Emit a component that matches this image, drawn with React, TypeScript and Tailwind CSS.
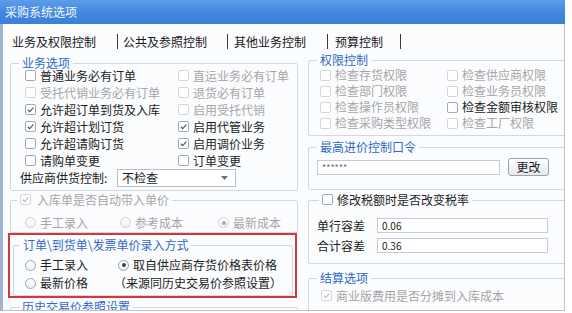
import { ReactNode } from 'react';

function Box({ checked, disabled }: { checked?: boolean; disabled?: boolean }) {
  return (
    <span
      className={`flex h-[11px] w-[11px] shrink-0 items-center justify-center rounded-[2px] border bg-white ${
        disabled ? 'border-[#d3d7dc]' : 'border-[#a3a9b1]'
      }`}
    >
      {checked && (
        <svg viewBox="0 0 10 10" className="h-[9px] w-[9px]">
          <path
            d="M2 5.3 L4.1 7.3 L8.2 2.8"
            fill="none"
            stroke={disabled ? '#b7bbc0' : '#50555b'}
            strokeWidth="1.3"
          />
        </svg>
      )}
    </span>
  );
}

function Radio({ checked, disabled }: { checked?: boolean; disabled?: boolean }) {
  return (
    <span
      className={`flex h-[11px] w-[11px] shrink-0 items-center justify-center rounded-full border bg-gradient-to-b from-white to-[#eef0f3] ${
        disabled ? 'border-[#cfd3d8]' : 'border-[#9ca3ac]'
      }`}
    >
      {checked && (
        <span className={`h-[4px] w-[4px] rounded-full ${disabled ? 'bg-[#a9adb2]' : 'bg-[#3a3f45]'}`}></span>
      )}
    </span>
  );
}

function Check({
  label,
  checked,
  disabled,
  h = 'h-[17px]',
}: {
  label: string;
  checked?: boolean;
  disabled?: boolean;
  h?: string;
}) {
  return (
    <div className={`flex ${h} items-center`}>
      <Box checked={checked} disabled={disabled} />
      <span className={`ml-[4px] whitespace-nowrap ${disabled ? 'text-[#a6a6a6]' : 'text-[#1c1c1c]'}`}>{label}</span>
    </div>
  );
}

function Opt({ label, checked, disabled, w }: { label: string; checked?: boolean; disabled?: boolean; w?: string }) {
  return (
    <div className={`flex items-center ${w ?? ''}`}>
      <Radio checked={checked} disabled={disabled} />
      <span className={`ml-[4px] whitespace-nowrap ${disabled ? 'text-[#a6a6a6]' : 'text-[#1c1c1c]'}`}>{label}</span>
    </div>
  );
}

function Group({
  legend,
  left = 'left-[8px]',
  className,
  children,
}: {
  legend: ReactNode;
  left?: string;
  className?: string;
  children?: ReactNode;
}) {
  return (
    <div className={`relative shrink-0 rounded-[2px] border border-[#d2d8e0] ${className ?? ''}`}>
      <div className={`absolute -top-[8px] ${left} flex h-[13px] items-center bg-[#fbfcfe] px-[3px] leading-[13px] text-[#3169c4]`}>
        {legend}
      </div>
      {children}
    </div>
  );
}

const tabs = [
  { label: '业务及权限控制', w: 'w-[105px]', ml: '' },
  { label: '公共及参照控制', w: 'w-[104px]', ml: 'ml-[5px]' },
  { label: '其他业务控制', w: 'w-[93px]', ml: 'ml-[6px]' },
  { label: '预算控制', w: 'w-[65px]', ml: 'ml-[7px]' },
];

export default function App() {
  return (
    <div className="h-[313px] w-[572px] overflow-hidden bg-white font-['Noto_Sans_CJK_SC','Noto_Sans',sans-serif] text-[12px]">
      <div className="flex w-[565px] flex-col">
        {/* Title bar */}
        <div className="flex h-[24px] items-center bg-gradient-to-b from-[#5d9de8] via-[#4489df] to-[#3a80da] pl-[5px] text-[12px] text-[#f2f7ff]">
          采购系统选项
        </div>

        {/* Body */}
        <div className="h-[287px] overflow-hidden border-b border-l-[3px] border-r border-b-[#b9c1cb] border-l-[#9fb4d2] border-r-[#b9c1cb] bg-[#fbfcfe]">
          {/* Tabs */}
          <div className="flex h-[28px] items-center pl-[9px] pt-[7px] text-[12px] text-[#161616]">
            {tabs.map((t) => (
              <div key={t.label} className={`flex items-center ${t.ml}`}>
                <span className={`${t.w} whitespace-nowrap`}>{t.label}</span>
                <span className="h-[15px] w-px bg-[#3c3c3c]"></span>
              </div>
            ))}
          </div>

          <div className="flex gap-[10px] pl-[7px]">
            {/* Left column */}
            <div className="flex w-[288px] shrink-0 flex-col">
              <Group legend="业务选项" className="mt-[11px] h-[128px] pl-[14px] pt-[3px]">
                <div className="grid grid-cols-[153px_1fr]">
                  <Check label="普通业务必有订单" />
                  <Check label="直运业务必有订单" disabled />
                  <Check label="受托代销业务必有订单" disabled />
                  <Check label="退货必有订单" disabled />
                  <Check label="允许超订单到货及入库" checked />
                  <Check label="启用受托代销" disabled />
                  <Check label="允许超计划订货" checked />
                  <Check label="启用代管业务" checked />
                  <Check label="允许超请购订货" />
                  <Check label="启用调价业务" checked />
                  <Check label="请购单变更" />
                  <Check label="订单变更" />
                </div>
                <div className="-ml-[5px] flex h-[17px] items-center">
                  <span className="w-[97px] whitespace-nowrap text-[#1c1c1c]">供应商供货控制:</span>
                  <div className="flex h-[18px] w-[119px] items-center justify-between border border-[#b7bec7] bg-white pl-[4px] pr-[7px] text-[#1c1c1c]">
                    <span>不检查</span>
                    <svg viewBox="0 0 7 4" className="h-[4px] w-[7px]">
                      <path d="M0 0 L7 0 L3.5 4 Z" fill="#6b7077" />
                    </svg>
                  </div>
                </div>
              </Group>

              <Group
                legend={
                  <>
                    <Box checked disabled />
                    <span className="ml-[6px] text-[#a6a6a6]">入库单是否自动带入单价</span>
                  </>
                }
                left="left-[6px]"
                className="mt-[9px] h-[33px] pl-[14px] pt-[13px]"
              >
                <div className="flex h-[17px] items-center">
                  <Opt label="手工录入" disabled w="w-[95px]" />
                  <Opt label="参考成本" disabled w="w-[98px]" />
                  <Opt label="最新成本" checked disabled />
                </div>
              </Group>

              {/* highlighted area */}
              <div className="-ml-[2px] h-[65px] w-[289px] shrink-0 border-2 border-[#d6363c]">
                <Group
                  legend="订单\到货单\发票单价录入方式"
                  left="left-[6px]"
                  className="ml-[3px] mr-[2px] mt-[10px] h-[51px] pl-[11px] pt-[10px]"
                >
                  <div className="flex h-[18px] items-center">
                    <Opt label="手工录入" w="w-[93px]" />
                    <Opt label="取自供应商存货价格表价格" checked />
                  </div>
                  <div className="flex h-[18px] items-center">
                    <Opt label="最新价格" w="w-[89px]" />
                    <span className="whitespace-nowrap text-[#1c1c1c]">（来源同历史交易价参照设置）</span>
                  </div>
                </Group>
              </div>

              <Group legend="历史交易价参照设置" className="mt-[9px] h-[40px]" />
            </div>

            {/* Right column */}
            <div className="flex w-[270px] shrink-0 flex-col">
              <Group legend="权限控制" className="mt-[8px] h-[76px] pl-[11px] pt-[6px]">
                <div className="grid grid-cols-[127px_1fr]">
                  <Check label="检查存货权限" disabled h="h-[16px]" />
                  <Check label="检查供应商权限" disabled h="h-[16px]" />
                  <Check label="检查部门权限" disabled h="h-[16px]" />
                  <Check label="检查业务员权限" disabled h="h-[16px]" />
                  <Check label="检查操作员权限" disabled h="h-[16px]" />
                  <Check label="检查金额审核权限" h="h-[16px]" />
                  <Check label="检查采购类型权限" disabled h="h-[16px]" />
                  <Check label="检查工厂权限" disabled h="h-[16px]" />
                </div>
              </Group>

              <Group legend="最高进价控制口令" className="mt-[11px] h-[43px] pl-[8px] pt-[10px]">
                <div className="flex h-[18px] items-center">
                  <div className="flex h-[15px] w-[183px] items-center border border-[#c4cbd4] bg-white pl-[4px] text-[9px] leading-none text-[#6a6f75]">
                    ******
                  </div>
                  <div className="ml-[8px] flex h-[18px] w-[41px] items-center justify-center rounded-[3px] border border-[#9aa2ac] bg-gradient-to-b from-white to-[#e6e9ed] text-[#1c1c1c]">
                    更改
                  </div>
                </div>
              </Group>

              <Group
                legend={
                  <>
                    <Box />
                    <span className="ml-[4px] text-[#1c1c1c]">修改税额时是否改变税率</span>
                  </>
                }
                left="left-[10px]"
                className="mt-[10px] h-[64px] pl-[8px] pt-[17px]"
              >
                <div className="flex flex-col gap-[5px]">
                  <div className="flex h-[15px] items-center">
                    <span className="w-[60px] whitespace-nowrap text-[#1c1c1c]">单行容差</span>
                    <div className="flex h-[15px] w-[171px] items-center border border-[#c4cbd4] bg-white pl-[4px] text-[10px] text-[#1c1c1c]">
                      0.06
                    </div>
                  </div>
                  <div className="flex h-[15px] items-center">
                    <span className="w-[60px] whitespace-nowrap text-[#1c1c1c]">合计容差</span>
                    <div className="flex h-[15px] w-[171px] items-center border border-[#c4cbd4] bg-white pl-[4px] text-[10px] text-[#1c1c1c]">
                      0.36
                    </div>
                  </div>
                </div>
              </Group>

              <Group legend="结算选项" className="mt-[14px] h-[40px] pl-[12px] pt-[8px]">
                <Check label="商业版费用是否分摊到入库成本" checked disabled />
              </Group>
            </div>
          </div>
        </div>
      </div>
    </div>
  );
}
